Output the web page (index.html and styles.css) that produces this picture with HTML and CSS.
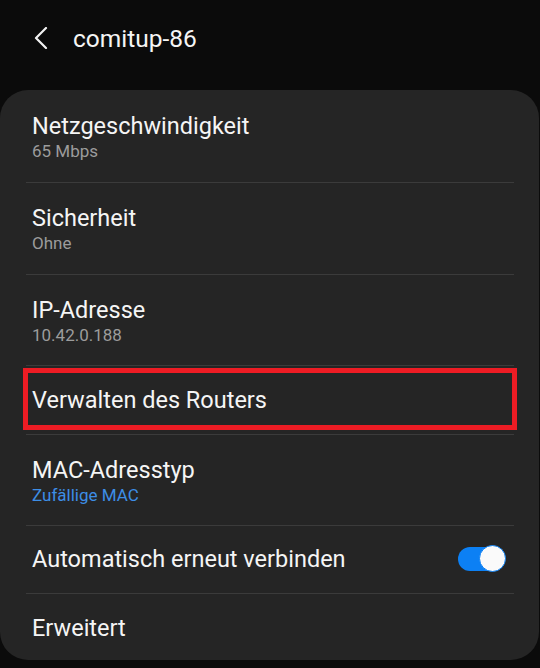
FILE: index.html
```html
<!DOCTYPE html>
<html lang="de">
<head>
<meta charset="utf-8">
<link rel="stylesheet" href="styles.css">
</head>
<body>
<header class="header">
  <svg class="back" width="14" height="22" viewBox="0 0 14 22"><path d="M12 1 L2 11 L12 21" fill="none" stroke="#f2f2f2" stroke-width="2.2" stroke-linecap="round" stroke-linejoin="round"/></svg>
  <h1 class="title">comitup-86</h1>
</header>
<main class="card">
  <div class="row two r1">
    <div class="label">Netzgeschwindigkeit</div>
    <div class="sub">65 Mbps</div>
  </div>
  <div class="row two r2">
    <div class="label">Sicherheit</div>
    <div class="sub">Ohne</div>
  </div>
  <div class="row two">
    <div class="label">IP-Adresse</div>
    <div class="sub">10.42.0.188</div>
  </div>
  <div class="row one">
    <div class="label">Verwalten des Routers</div>
    <div class="mark"></div>
  </div>
  <div class="row two">
    <div class="label">MAC-Adresstyp</div>
    <div class="sub blue">Zufällige MAC</div>
  </div>
  <div class="row toggle-row">
    <div class="label">Automatisch erneut verbinden</div>
    <div class="switch"><div class="knob"></div></div>
  </div>
  <div class="row last">
    <div class="label">Erweitert</div>
  </div>
</main>
</body>
</html>
```
FILE: styles.css
```css
html, body {
  margin: 0;
  padding: 0;
  background: #0b0b0b;
  font-family: Roboto, "Noto Sans", sans-serif;
  color: #f5f5f5;
}
body {
  width: 540px;
  height: 668px;
  overflow: hidden;
}
.header {
  height: 77px;
  display: flex;
  align-items: center;
  padding-left: 34px;
  box-sizing: border-box;
}
.back {
  display: block;
  margin-top: -1px;
}
.title {
  margin: 0 0 0 25px;
  font-size: 24.5px;
  font-weight: 400;
  color: #f5f5f5;
}
.card {
  margin-top: 13px;
  width: 539px;
  height: 570px;
  background: #252525;
  border-radius: 28px;
  padding: 0 25px 0 26px;
  box-sizing: border-box;
}
.row {
  position: relative;
  padding-left: 6px;
  border-top: 1px solid #3b3b3b;
  box-sizing: border-box;
}
.r1 {
  border-top: none;
}
.label {
  font-size: 23.5px;
  line-height: 29px;
  color: #f5f5f5;
}
.sub {
  margin-top: -1px;
  font-size: 17px;
  line-height: 22px;
  color: #9c9c9c;
}
.sub.blue {
  color: #3d8ee6;
}
.two {
  height: 91px;
  padding-top: 21px;
}
.r1 {
  height: 92px;
  padding-top: 22px;
}
.r2 {
  height: 92px;
}
.one {
  height: 69px;
  padding-top: 20px;
}
.toggle-row {
  display: flex;
  align-items: flex-start;
  justify-content: space-between;
  height: 68px;
  padding-top: 19px;
}
.switch {
  position: relative;
  width: 47px;
  height: 24px;
  border-radius: 12px;
  background: #0c80f4;
  margin-right: 9px;
  margin-top: 2px;
}
.knob {
  position: absolute;
  right: -1px;
  top: -2px;
  width: 25px;
  height: 25px;
  border-radius: 50%;
  background: #fafafa;
  border: 1.5px solid #0c80f4;
}
.last {
  height: 67px;
  padding-top: 20px;
}
.mark {
  position: absolute;
  left: -3px;
  right: -3px;
  top: 2px;
  height: 62px;
  border: 5px solid #ed1c24;
  box-sizing: border-box;
}
```
